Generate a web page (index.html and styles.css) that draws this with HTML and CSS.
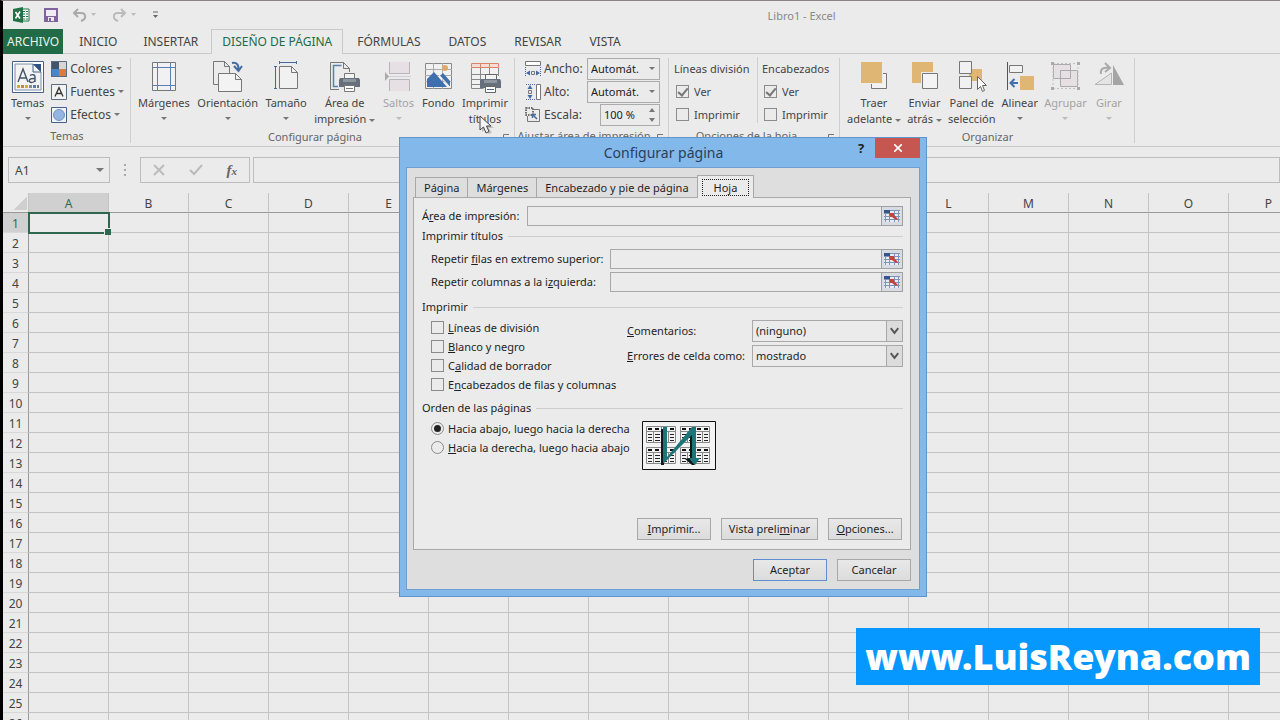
FILE: index.html
```
<!DOCTYPE html>
<html lang="es">
<head>
  <meta charset="UTF-8">
  <meta name="viewport" content="width=device-width, initial-scale=1.0">
  <title>Libro1 - Excel</title>
  <link rel="stylesheet" href="styles.css">
</head>
<body>
<div class="app">

  <!-- Barra de título -->
  <header class="titlebar">
    <div class="quick">
      <svg class="logo" width="17" height="16" viewBox="0 0 17 16"><path d="M9 2h7v12H9z" fill="#fff" stroke="#217346"/><path d="M10 4.500h5M10 7h5M10 9.500h5M10 12h5" stroke="#217346"/><path d="M12.500 3v10" stroke="#ebebeb"/><path d="M0 2l10-2v16L0 14z" fill="#217346"/><path d="M2.500 5l4.500 6.500M7 4.500L2.500 11.500" stroke="#fff" stroke-width="1.600"/></svg>
      <button class="q-btn save" aria-label="Guardar"><svg width="14" height="14" viewBox="0 0 14 14"><path d="M1 1h12v12H1z" fill="#f1ecf4" stroke="#8062a0" stroke-width="2"/><path d="M1 8h12v5H1z" fill="#8062a0"/><path d="M4 9h6v4H4z" fill="#ebebeb"/><path d="M5 10h2v3H5z" fill="#8062a0"/></svg></button>
      <button class="q-btn" aria-label="Deshacer"><svg width="24" height="14" viewBox="0 0 24 14"><path d="M6 1L2 5l4 4M2 5h7c5 0 6 6 0 8" fill="none" stroke="#aaa" stroke-width="2"/><path d="M19 5h5l-2.500 3z" fill="#bbb"/></svg></button>
      <button class="q-btn" aria-label="Rehacer"><svg width="24" height="14" viewBox="0 0 24 14"><path d="M9 1l4 4-4 4M13 5H6C1 5 0 11 6 13" fill="none" stroke="#bbb" stroke-width="2"/><path d="M19 5h5l-2.500 3z" fill="#bbb"/></svg></button>
      <button class="q-btn" aria-label="Personalizar"><svg width="7" height="8" viewBox="0 0 7 8"><path d="M1 1h5" stroke="#666"/><path d="M1 4h5L3.500 7z" fill="#666"/></svg></button>
    </div>
    <div class="doc-title">Libro1 - Excel</div>
  </header>

  <!-- Pestañas -->
  <nav class="tabs">
    <a class="tab file" href="#">ARCHIVO</a>
    <a class="tab" href="#">INICIO</a>
    <a class="tab" href="#">INSERTAR</a>
    <a class="tab active" href="#">DISEÑO DE PÁGINA</a>
    <a class="tab" href="#">FÓRMULAS</a>
    <a class="tab" href="#">DATOS</a>
    <a class="tab" href="#">REVISAR</a>
    <a class="tab" href="#">VISTA</a>
  </nav>

  <!-- Cinta de opciones -->
  <div class="ribbon">
    <section class="group g-themes">
      <div class="group-body">
        <button class="big">
          <svg width="32" height="32" viewBox="0 0 32 32"><path d="M.5.5h31v31H.5z" fill="#fff" stroke="#44618c"/><path d="M3 3h18l8 8v18H3z" fill="#f3f3f3" stroke="#7b8da8"/><path d="M21 3h8v8z" fill="#2f5286"/><path d="M21 3v8h8" fill="none" stroke="#44618c"/><path d="M6 21l5-13 5 13M8 17h6" fill="none" stroke="#44546a" stroke-width="1.400"/><path d="M18 14.500c2-1.500 5-1 5 1v5.500m0-3.500c-7-.5-7 4-3.500 4 2 0 3.500-1.500 3.500-3" fill="none" stroke="#44546a" stroke-width="1.400"/><path d="M5 24h3v3H5z" fill="#d9a62e"/><path d="M9 24h3v3H9z" fill="#c8843c"/><path d="M13 24h3v3h-3z" fill="#c8b03c"/><path d="M17 24h3v3h-3z" fill="#8a8a8a"/><path d="M21 24h3v3h-3z" fill="#557bb5"/><path d="M25 24h2v3h-2z" fill="#777"/></svg>
          <span>Temas</span><i class="arrow"></i>
        </button>
        <div class="stack">
          <button class="small"><svg width="16" height="16" viewBox="0 0 16 16"><path d="M0 0h8v8H0z" fill="#44546a"/><path d="M8 0h8v8H8z" fill="#d6d6d6"/><path d="M0 8h8v8H0z" fill="#4a86c5"/><path d="M8 8h8v8H8z" fill="#dd7b3b"/><path d="M.5.5h15v15H.5z" fill="none" stroke="#5b6b80"/></svg>Colores<i class="arrow"></i></button>
          <button class="small"><svg width="16" height="16" viewBox="0 0 16 16"><path d="M.5.5h15v15H.5z" fill="#f3f3f3" stroke="#5b6b80"/><path d="M4 12.500l4-9 4 9M5.500 9.500h5" fill="none" stroke="#333" stroke-width="1.300"/></svg>Fuentes<i class="arrow"></i></button>
          <button class="small"><svg width="16" height="16" viewBox="0 0 16 16"><path d="M.5.5h15v15H.5z" fill="#f3f3f3" stroke="#44618c"/><circle cx="8" cy="8" r="5.500" fill="#94b5e0" stroke="#6d93c8"/></svg>Efectos<i class="arrow"></i></button>
        </div>
      </div>
      <h2>Temas</h2>
    </section>

    <section class="group g-page">
      <div class="group-body">
        <button class="big">
          <svg width="32" height="32" viewBox="0 0 32 32"><path d="M4.500 1.500h23v28h-23z" fill="#f1f1f1" stroke="#777"/><path d="M9.500 1v29M22.500 1v29M4 6.500h24M4 24.500h24" stroke="#5b7fb5"/></svg>
          <span>Márgenes</span><i class="arrow"></i>
        </button>
        <button class="big">
          <svg width="32" height="32" viewBox="0 0 32 32"><path d="M6 23.500H1.500v-23h11l5 5V12" fill="none" stroke="#777"/><path d="M12.500.5v5h5" fill="none" stroke="#777"/><path d="M6.500 12.500h17l6 6v12h-23z" fill="#f3f3f3" stroke="#777"/><path d="M23.500 12.500v6h6" fill="none" stroke="#777"/><path d="M20 2c5-1 7 2 6.500 8M22 5l4.500 5L30 5" fill="none" stroke="#44699f" stroke-width="2"/></svg>
          <span>Orientación</span><i class="arrow"></i>
        </button>
        <button class="big">
          <svg width="32" height="32" viewBox="0 0 32 32"><path d="M9 1.500h18M9.500 0v3M26.500 0v3M5.500 5v23M4 5.500h3M4 27.500h3" stroke="#44699f"/><path d="M9.500 5.500h12l6 6v16h-18z" fill="#f1f1f1" stroke="#777"/><path d="M21.500 5.500v6h6" fill="none" stroke="#777"/></svg>
          <span>Tamaño</span><i class="arrow"></i>
        </button>
        <button class="big">
          <svg width="32" height="32" viewBox="0 0 32 32"><path d="M10 28.500H1.500v-27h13l6 6V11M14.500 1.500v6h6" fill="none" stroke="#777"/><path d="M9 25.500H4.500v-21h8" fill="none" stroke="#5b7fb5" stroke-width="1.500"/><path d="M15.500 12.500h10V18h-10z" fill="#f3f3f3" stroke="#777"/><path d="M11 17h19l1 2v7H10v-7z" fill="#66707c"/><path d="M14 18h13v3H14z" fill="#8d959e"/><path d="M15.500 24.500h10v6h-10z" fill="#fff" stroke="#777"/><path d="M17 27.500h7" stroke="#777"/></svg>
          <span>Área de<br>impresión <i class="arrow"></i></span>
        </button>
        <button class="big off" disabled>
          <svg width="32" height="32" viewBox="0 0 32 32"><path d="M6.500 1v11.500h20V1M6.500 30V18.500h20V30" fill="#e6e0e4" stroke="#b9b4b7"/><path d="M2 11l4 4.500L2 20z" fill="#aaa"/><path d="M6 15.500h22" stroke="#d0d0d0"/></svg>
          <span>Saltos</span><i class="arrow"></i>
        </button>
        <button class="big">
          <svg width="32" height="32" viewBox="0 0 32 32"><path d="M3.500 2.500h26v25h-26z" fill="#f1f1f1" stroke="#888"/><path d="M11.500 2v26M20.500 2v26M3 8.500h27M3 14.500h27M3 20.500h27" stroke="#aaa"/><circle cx="23" cy="7" r="3" fill="#dfa96c"/><path d="M5 26v-8l7-7 13 15z" fill="#3f6fae"/><path d="M18 15l3-3 7 8v6z" fill="#3f6fae"/><path d="M17 14l11 12" stroke="#ebebeb"/></svg>
          <span>Fondo</span>
        </button>
        <button class="big">
          <svg width="32" height="32" viewBox="0 0 32 32"><path d="M2.500 2.500h27v25h-27z" fill="#f1f1f1"/><path d="M2.500 7v20.500h12M11.500 7v20M20.500 7v6M29.500 7v8M3 13.500h26M3 18.500h12M3 23.500h10" fill="none" stroke="#888"/><path d="M2.500 2.500h27v4h-27zM11.500 2v5M20.500 2v5" fill="#f5ddd5" stroke="#d98468"/><path d="M16.500 13.500h11V19h-11z" fill="#f3f3f3" stroke="#666"/><path d="M12 18h19l1 2v7H11v-7z" fill="#66707c"/><path d="M15 19h13v3H15z" fill="#8d959e"/><path d="M16.500 25.500h10v6h-10z" fill="#fff" stroke="#666"/><path d="M18 28.500h7" stroke="#446a9f"/></svg>
          <span>Imprimir<br>títulos</span>
        </button>
      </div>
      <h2>Configurar página</h2>
      <svg class="launcher" width="8" height="8" viewBox="0 0 8 8"><path d="M.5 6V.5H6M3 3l4 4M7 4v3H4" fill="none" stroke="#777"/></svg>
    </section>

    <section class="group g-fit">
      <div class="group-body rows">
        <div class="row"><svg width="16" height="16" viewBox="0 0 16 16"><path d="M.5.5h15v4H.5z" fill="#fff" stroke="#777"/><path d="M.5 6v9M15.500 6v9" stroke="#446a9f" stroke-dasharray="1 1"/><path d="M6.500 10.500h3v3h-3z" fill="none" stroke="#777"/><path d="M5 9.500v5L1 12zM11 9.500v5l4-2.500z" fill="#446a9f"/></svg><label for="ancho">Ancho:</label><span class="drop"><select id="ancho"><option>Automát.</option></select><i class="arrow"></i></span></div>
        <div class="row"><svg width="16" height="16" viewBox="0 0 16 16"><path d="M11.500.5h4v15h-4z" fill="#fff" stroke="#777"/><path d="M1 .5h9M1 15.500h9" stroke="#446a9f" stroke-dasharray="1 1"/><path d="M3.500 6.500h3v3h-3z" fill="none" stroke="#777"/><path d="M2.500 5h5L5 1zM2.500 11h5L5 15z" fill="#446a9f"/></svg><label for="alto">Alto:</label><span class="drop"><select id="alto"><option>Automát.</option></select><i class="arrow"></i></span></div>
        <div class="row"><svg width="16" height="16" viewBox="0 0 16 16"><path d="M9 2.500h5.500v12h-12V9" fill="none" stroke="#777"/><path d="M1 1h7v7H1z" fill="none" stroke="#444" stroke-width="1.500" stroke-dasharray="1.500 1"/><path d="M12 12L7 7M7.500 11V7.500H11" fill="none" stroke="#446a9f" stroke-width="1.500"/></svg><label for="escala">Escala:</label><span class="spin"><input id="escala" type="text" value="100 %"><svg width="6" height="14" viewBox="0 0 6 14"><path d="M0 4h6L3 0zM0 10h6l-3 4z" fill="#777"/></svg></span></div>
      </div>
      <h2>Ajustar área de impresión</h2>
      <svg class="launcher" width="8" height="8" viewBox="0 0 8 8"><path d="M.5 6V.5H6M3 3l4 4M7 4v3H4" fill="none" stroke="#777"/></svg>
    </section>

    <section class="group g-sheet">
      <div class="group-body">
        <div class="opts">
          <span>Líneas división</span>
          <label><input type="checkbox" checked>Ver</label>
          <label><input type="checkbox">Imprimir</label>
        </div>
        <div class="opts">
          <span>Encabezados</span>
          <label><input type="checkbox" checked>Ver</label>
          <label><input type="checkbox">Imprimir</label>
        </div>
      </div>
      <h2>Opciones de la hoja</h2>
      <svg class="launcher" width="8" height="8" viewBox="0 0 8 8"><path d="M.5 6V.5H6M3 3l4 4M7 4v3H4" fill="none" stroke="#777"/></svg>
    </section>

    <section class="group g-arrange">
      <div class="group-body">
        <button class="big">
          <svg width="32" height="32" viewBox="0 0 32 32"><path d="M13.500 12.500h15v15h-15z" fill="#f3f3f3" stroke="#777"/><path d="M2 0h23v23H2z" fill="#ebebeb"/><path d="M3 1h21v21H3z" fill="#dfb674"/></svg>
          <span>Traer<br>adelante <i class="arrow"></i></span>
        </button>
        <button class="big">
          <svg width="32" height="32" viewBox="0 0 32 32"><path d="M3 1h21v21H3z" fill="#dfb674"/><path d="M12 11h18v18H12z" fill="#ebebeb"/><path d="M13.500 12.500h15v15h-15z" fill="#f3f3f3" stroke="#777"/></svg>
          <span>Enviar<br>atrás <i class="arrow"></i></span>
        </button>
        <button class="big">
          <svg width="32" height="32" viewBox="0 0 32 32"><path d="M13 8h13v12H13z" fill="#dfb674"/><path d="M3.500.5h12v12h-12zM3.500 15.500h12v12h-12z" fill="#f1f1f1" stroke="#777"/><path d="M21.500 15.500v13l3-3 2 5 2-1-2-5h4z" fill="#fff" stroke="#666"/></svg>
          <span>Panel de<br>selección</span>
        </button>
        <button class="big">
          <svg width="32" height="32" viewBox="0 0 32 32"><path d="M3.500 1v28" stroke="#555"/><path d="M5.500 4.500h13v7h-13z" fill="#f1f1f1" stroke="#777"/><path d="M16 15h14v14H16z" fill="#dfb674"/><path d="M14 22H7M10.500 18L6.500 22l4 4" fill="none" stroke="#3f6fae" stroke-width="2"/></svg>
          <span>Alinear</span><i class="arrow"></i>
        </button>
        <button class="big off" disabled>
          <svg width="32" height="32" viewBox="0 0 32 32"><path d="M4.500 3.500h17v14h-17zM11.500 9.500h17v16h-17z" fill="#e6dfe3" stroke="#aaa"/><path d="M4 2.500h25M4 27.500h25M4 2v26M29 2v26" stroke="#c4bfc2" stroke-dasharray="2 2"/><path d="M2 1h3v3H2zM28 1h3v3h-3zM2 26h3v3H2zM28 26h3v3h-3z" fill="#aaa"/></svg>
          <span>Agrupar</span><i class="arrow"></i>
        </button>
        <button class="big off" disabled>
          <svg width="32" height="32" viewBox="0 0 32 32"><path d="M18.500 12v11.500H2z" fill="#e4e4e4" stroke="#b5b5b5"/><path d="M20 4l11 20H20z" fill="#a5a5a5"/><path d="M8 13c-1-6 4-7 8-6M12 2l5 5-5 4" fill="none" stroke="#aaa" stroke-width="2"/></svg>
          <span>Girar</span><i class="arrow"></i>
        </button>
      </div>
      <h2>Organizar</h2>
    </section>
  </div>

  <!-- Barra de fórmulas -->
  <div class="formula-bar">
    <span class="name-box"><input type="text" value="A1" aria-label="Cuadro de nombres"><i class="arrow"></i></span>
    <svg class="dots" width="2" height="12" viewBox="0 0 2 12"><path d="M0 0h2v2H0zM0 5h2v2H0zM0 10h2v2H0z" fill="#aaa"/></svg>
    <div class="fx">
      <button aria-label="Cancelar"><svg width="12" height="12" viewBox="0 0 12 12"><path d="M1 1l10 10M11 1L1 11" stroke="#bbb" stroke-width="2"/></svg></button>
      <button aria-label="Introducir"><svg width="14" height="12" viewBox="0 0 14 12"><path d="M1 6l4 4 8-9" fill="none" stroke="#bbb" stroke-width="2"/></svg></button>
      <button class="fn">f<small>x</small></button>
    </div>
    <input class="formula" type="text" aria-label="Fórmula">
  </div>

  <!-- Hoja -->
  <div class="sheet">
    <table class="grid">
      <thead><tr id="cols"><th class="corner"></th></tr></thead>
      <tbody id="cells"></tbody>
    </table>
  </div>

  <!-- Cuadro de diálogo -->
  <div class="dialog" role="dialog" aria-labelledby="dlg-title">
    <div class="dlg-head">
      <h1 id="dlg-title">Configurar página</h1>
      <button class="help">?</button>
      <button class="close" aria-label="Cerrar"><svg width="8" height="8" viewBox="0 0 8 8"><path d="M0 0l8 8M8 0L0 8" stroke="#fff" stroke-width="1.600"/></svg></button>
    </div>
    <div class="dlg-body">
      <div class="dlg-tabs">
        <button>Página</button>
        <button>Márgenes</button>
        <button>Encabezado y pie de página</button>
        <button class="current"><span>Hoja</span></button>
      </div>
      <div class="panel">
        <div class="field">
          <label for="area">Á<u>r</u>ea de impresión:</label>
          <input id="area" type="text">
          <button class="pick" aria-label="Contraer"><svg width="16" height="12" viewBox="0 0 16 12"><path d="M0 0h16v12H0z" fill="#e8ebf2"/><path d="M0 .5h16M0 3.500h16M0 6.500h16M0 9.500h16M1.500 0v12M5.500 0v12M10.500 0v12M14.500 0v12" stroke="#7d93b8"/><path d="M0 0h6v3H0z" fill="#34558b"/><path d="M5 3h5v2l4 4-2 1-4-3H6z" fill="#c4443a"/></svg></button>
        </div>
        <h3><span>Imprimir títulos</span></h3>
        <div class="field sub">
          <label for="filas">Repetir <u>f</u>ilas en extremo superior:</label>
          <input id="filas" type="text">
          <button class="pick" aria-label="Contraer"><svg width="16" height="12" viewBox="0 0 16 12"><path d="M0 0h16v12H0z" fill="#e8ebf2"/><path d="M0 .5h16M0 3.500h16M0 6.500h16M0 9.500h16M1.500 0v12M5.500 0v12M10.500 0v12M14.500 0v12" stroke="#7d93b8"/><path d="M0 0h6v3H0z" fill="#34558b"/><path d="M5 3h5v2l4 4-2 1-4-3H6z" fill="#c4443a"/></svg></button>
        </div>
        <div class="field sub">
          <label for="columnas">Repetir columnas a la i<u>z</u>quierda:</label>
          <input id="columnas" type="text">
          <button class="pick" aria-label="Contraer"><svg width="16" height="12" viewBox="0 0 16 12"><path d="M0 0h16v12H0z" fill="#e8ebf2"/><path d="M0 .5h16M0 3.500h16M0 6.500h16M0 9.500h16M1.500 0v12M5.500 0v12M10.500 0v12M14.500 0v12" stroke="#7d93b8"/><path d="M0 0h6v3H0z" fill="#34558b"/><path d="M5 3h5v2l4 4-2 1-4-3H6z" fill="#c4443a"/></svg></button>
        </div>
        <h3><span>Imprimir</span></h3>
        <div class="print">
          <div class="checks">
            <label><input type="checkbox"><span><u>L</u>íneas de división</span></label>
            <label><input type="checkbox"><span><u>B</u>lanco y negro</span></label>
            <label><input type="checkbox"><span>C<u>a</u>lidad de borrador</span></label>
            <label><input type="checkbox"><span>E<u>n</u>cabezados de filas y columnas</span></label>
          </div>
          <div class="combos">
            <div class="combo-row"><label for="coment"><u>C</u>omentarios:</label><span class="combo"><select id="coment"><option>(ninguno)</option></select><svg width="16" height="18" viewBox="0 0 16 18"><path d="M4 6l4 5 4-5" fill="none" stroke="#555" stroke-width="2"/></svg></span></div>
            <div class="combo-row"><label for="errores"><u>E</u>rrores de celda como:</label><span class="combo"><select id="errores"><option>mostrado</option></select><svg width="16" height="18" viewBox="0 0 16 18"><path d="M4 6l4 5 4-5" fill="none" stroke="#555" stroke-width="2"/></svg></span></div>
          </div>
        </div>
        <h3><span>Orden de las páginas</span></h3>
        <div class="order">
          <div class="checks">
            <label><input type="radio" name="orden" checked><span>Hacia abajo, lue<u>g</u>o hacia la derecha</span></label>
            <label><input type="radio" name="orden"><span><u>H</u>acia la derecha, luego hacia abajo</span></label>
          </div>
          <svg width="74" height="49" viewBox="0 0 74 49">
            <defs>
              <g id="sheet-page">
                <path d="M.5.5h29v16H.5zM0 5.500h30M7.500 5v12M15.500 0v17M22.500 5v12" fill="#f3f3f3" stroke="#888"/>
                <path d="M2 3h4M9 3h4M17 3h4M24 3h4" stroke="#111" stroke-width="2"/>
                <path d="M2 8.500h4M2 11.500h4M2 14.500h4M9 8.500h5M9 11.500h5M9 14.500h5M17 8.500h4M17 11.500h4M17 14.500h4M24 8.500h4M24 11.500h4M24 14.500h4" stroke="#222"/>
              </g>
            </defs>
            <path d="M.5.5h73v48H.5z" fill="#f3f3f3" stroke="#111"/>
            <use href="#sheet-page" x="4" y="5"/><use href="#sheet-page" x="38" y="5"/>
            <use href="#sheet-page" x="4" y="26"/><use href="#sheet-page" x="38" y="26"/>
            <path d="M19 8h3v36h-3zM48 14h3v25h-3zM43 38l7 6h3l-6-7z" fill="#0b1a1c"/>
            <path d="M21 6h4v30L50 6h4v31h4l-5 7-6-7h3V14L22 42h-1z" fill="#1f7478"/>
          </svg>
        </div>
        <div class="panel-btns">
          <button class="btn"><u>I</u>mprimir...</button>
          <button class="btn wide">Vista preli<u>m</u>inar</button>
          <button class="btn"><u>O</u>pciones...</button>
        </div>
      </div>
      <div class="dlg-foot">
        <button class="btn default">Aceptar</button>
        <button class="btn">Cancelar</button>
      </div>
    </div>
  </div>

  <!-- Puntero -->
  <svg class="pointer" width="16" height="20" viewBox="0 0 16 20"><path d="M3 3v14l4-3 2 5 4-1-3-5h5z" fill="#999" opacity=".5"/><path d="M1 1v14l3.500-3 2.500 6 3-1.500-2.500-5.500H12z" fill="#f4f4f4" stroke="#444"/></svg>

  <a class="watermark" href="#">www.LuisReyna.com</a>
</div>

<script>
  // columnas A-P y filas 1-26
  var cols = 'ABCDEFGHIJKLMNOP'.split('');
  var head = document.getElementById('cols');
  var cells = document.getElementById('cells');

  cols.forEach(function (c, i) {
    var th = document.createElement('th');
    th.textContent = c;
    if (i === 0) th.className = 'on';
    head.appendChild(th);
  });

  for (var r = 1; r <= 26; r++) {
    var tr = document.createElement('tr');
    var th = document.createElement('th');
    th.textContent = r;
    if (r === 1) th.className = 'on';
    tr.appendChild(th);
    for (var c = 0; c < cols.length; c++) {
      var td = document.createElement('td');
      if (r === 1 && c === 0) td.className = 'selected';
      tr.appendChild(td);
    }
    cells.appendChild(tr);
  }
</script>
</body>
</html>
```
FILE: styles.css
```
* {
  box-sizing: border-box;
}
body {
  margin: 0;
  font-family: "Noto Sans", "Open Sans", sans-serif;
  font-size: 12px;
  color: #444;
  background: #ebebeb;
  overflow: hidden;
}
button, input, select {
  font: inherit;
  color: inherit;
  margin: 0;
  padding: 0;
  border: none;
  border-radius: 0;
  background: none;
}
select {
  appearance: none;
}
a {
  color: inherit;
  text-decoration: none;
}
svg {
  display: block;
  flex: none;
}
h1, h2, h3 {
  margin: 0;
  font-weight: normal;
}

.app {
  position: relative;
  display: flex;
  flex-direction: column;
  height: 100vh;
  border-left: 3px solid #000;
  border-top: 1px solid #8a8486;
  overflow: hidden;
}
.arrow {
  display: inline-block;
  border: 3px solid transparent;
  border-top-color: #777;
  border-bottom: none;
}

/* ---------- barra de título ---------- */
.titlebar {
  display: flex;
  align-items: center;
  height: 28px;
  flex: none;
}
.quick {
  display: flex;
  align-items: center;
  gap: 16px;
  padding-left: 10px;
}
.save {
  margin: 0 -2px;
}
.doc-title {
  flex: 1;
  padding-left: 164px;
  text-align: center;
  font-size: 11px;
  color: #888;
}

/* ---------- pestañas ---------- */
.tabs {
  display: flex;
  height: 25px;
  flex: none;
  line-height: 24px;
  border-bottom: 1px solid #c9c9c9;
}
.tab {
  padding: 0 12px;
  height: 25px;
  border: 1px solid transparent;
  border-bottom: none;
}
.tab.file {
  padding: 0 3px;
  margin-right: 3px;
  background: #216b46;
  color: #e8f2ec;
}
.tab.active {
  padding: 0 10px;
  background: #ebebeb;
  border-color: #c9c9c9;
  color: #216b46;
}
.tab.active ~ .tab {
  padding: 0 13px;
}

/* ---------- cinta ---------- */
.ribbon {
  display: flex;
  height: 93px;
  flex: none;
  border-bottom: 1px solid #c9c9c9;
}
.group {
  position: relative;
  display: flex;
  flex-direction: column;
  padding-top: 3px;
  flex: none;
}
.group::after {
  content: "";
  position: absolute;
  right: 0;
  top: 4px;
  bottom: 3px;
  border-right: 1px solid #cfcfcf;
}
.group h2 {
  font-size: 11px;
  line-height: 20px;
  text-align: center;
  color: #666;
}
.g-page h2, .g-fit h2, .g-sheet h2 {
  padding-right: 16px;
  white-space: nowrap;
}
.group-body {
  display: flex;
  height: 72px;
}
.launcher {
  position: absolute;
  right: 4px;
  bottom: 4px;
}
.big {
  display: flex;
  flex-direction: column;
  align-items: center;
  padding: 4px 0 0;
  font-size: 11px;
  line-height: 16px;
  white-space: nowrap;
}
.big > svg {
  margin-bottom: 2px;
}
.big > .arrow {
  margin-top: 6px;
}
.big span .arrow {
  vertical-align: middle;
}
.off {
  color: #a3a3a3;
}
.off .arrow {
  border-top-color: #bbb;
}
.small {
  display: flex;
  align-items: center;
  gap: 3px;
  height: 23px;
}
.g-themes { width: 128px; }
.g-page { width: 384px; }
.g-fit { width: 154px; }
.g-sheet { width: 171px; }
.g-arrange { width: 295px; }

.g-themes .group-body {
  gap: 7px;
  padding-left: 8px;
}
.g-page .group-body {
  padding: 0 7px;
  justify-content: space-between;
}
.g-arrange .group-body {
  padding: 0 10px 0 7px;
  justify-content: space-between;
}
.rows {
  flex-direction: column;
  padding: 0 9px 0 10px;
}
.row {
  display: flex;
  align-items: center;
  gap: 3px;
  height: 23px;
}
.row label {
  flex: 1;
}
.drop, .spin {
  display: flex;
  align-items: center;
  justify-content: space-between;
  width: 73px;
  height: 22px;
  padding: 0 4px 0 3px;
  border: 1px solid #ababab;
  font-size: 11px;
  color: #222;
}
.drop select {
  width: 58px;
}
.spin {
  width: 60px;
}
.spin input {
  width: 42px;
}
.opts {
  display: flex;
  flex-direction: column;
  padding-left: 5px;
  font-size: 11px;
  line-height: 23px;
  width: 88px;
  white-space: nowrap;
}
.opts + .opts {
  height: 66px;
  width: 82px;
  padding-left: 4px;
  border-left: 1px solid #cfcfcf;
}
.opts label {
  display: flex;
  align-items: center;
  gap: 5px;
  height: 23px;
  padding-left: 2px;
}

/* casillas y opciones */
input[type=checkbox],
input[type=radio] {
  appearance: none;
  position: relative;
  width: 13px;
  height: 13px;
  flex: none;
  border: 1px solid #8c8c8c;
}
input[type=radio] {
  border-radius: 50%;
}
input[type=checkbox]:checked::after {
  content: "";
  position: absolute;
  left: 3px;
  top: 0;
  width: 4px;
  height: 8px;
  border: solid #777;
  border-width: 0 2px 2px 0;
  transform: rotate(40deg);
}
input[type=radio]:checked::after {
  content: "";
  position: absolute;
  left: 2px;
  top: 2px;
  width: 7px;
  height: 7px;
  border-radius: 50%;
  background: #222;
}

/* ---------- barra de fórmulas ---------- */
.formula-bar {
  display: flex;
  align-items: center;
  height: 46px;
  flex: none;
  padding-left: 5px;
}
.name-box, .fx, .formula {
  height: 26px;
  border: 1px solid #bdbdbd;
}
.name-box {
  display: flex;
  align-items: center;
  width: 102px;
  padding: 0 5px 0 6px;
}
.name-box input {
  flex: 1;
  width: 60px;
}
.name-box .arrow {
  border-width: 4px 4px 0;
}
.dots {
  margin: 0 14px;
}
.fx {
  display: flex;
  align-items: center;
  justify-content: space-between;
  width: 110px;
  padding: 0 12px;
  margin-right: 3px;
}
.fn {
  font: italic bold 15px "Liberation Serif", serif;
  color: #666;
}
.fn small {
  font-size: 11px;
}
.formula {
  flex: 1;
}

/* ---------- hoja ---------- */
.sheet {
  flex: 1;
  overflow: hidden;
}
.grid {
  width: 1306px;
  table-layout: fixed;
  border-collapse: separate;
  border-spacing: 0;
}
.grid th, .grid td {
  height: 20px;
  padding: 0;
  border-right: 1px solid #c4c4c4;
  border-bottom: 1px solid #c4c4c4;
}
.grid th {
  width: 80px;
  padding-top: 2px;
  font-weight: normal;
  line-height: 17px;
}
.grid thead th {
  border-bottom-color: #999;
}
.grid th:first-child {
  width: 26px;
}
.grid tbody th {
  border-bottom-color: #d8d8d8;
  border-right-color: #999;
}
.grid .corner {
  background: linear-gradient(135deg, transparent 50%, #cfcfcf 50%) 11px 4px / 13px 13px no-repeat;
}
.grid .on {
  background: #d0d0d0;
  color: #2f6b4f;
}
.selected {
  position: relative;
  outline: 2px solid #2f6650;
  outline-offset: -1px;
}
.selected::after {
  content: "";
  position: absolute;
  right: -3px;
  bottom: -3px;
  width: 6px;
  height: 6px;
  background: #2f6650;
  border: solid #ebebeb;
  border-width: 1px 0 0 1px;
}

/* ---------- diálogo ---------- */
.dialog {
  position: absolute;
  left: 396px;
  top: 136px;
  width: 528px;
  padding: 0 6px 6px;
  border: 1px solid #5f94cc;
  background: #83b8ea;
  font-size: 11px;
  color: #1e1e1e;
}
.dlg-head {
  display: flex;
  align-items: flex-start;
  height: 29px;
}
.dlg-head h1 {
  flex: 1;
  padding-left: 74px;
  text-align: center;
  font-size: 14px;
  line-height: 30px;
  color: #2a3f5a;
}
.help {
  width: 28px;
  line-height: 20px;
  font-size: 13px;
  font-weight: bold;
}
.close {
  display: flex;
  align-items: center;
  justify-content: center;
  width: 45px;
  height: 20px;
  background: #c55650;
}
.dlg-body {
  padding: 7px 8px 8px 6px;
  border: 1px solid #6f9fd0;
  background: #dedede;
}
.dlg-tabs {
  display: flex;
  align-items: flex-end;
  height: 22px;
  padding-left: 2px;
}
.dlg-tabs button {
  height: 20px;
  padding: 0 8px;
  border: 1px solid #a8a8a8;
  border-right: none;
  border-bottom: none;
}
.dlg-tabs .current {
  position: relative;
  height: 23px;
  margin-bottom: -1px;
  padding: 0 4px;
  border-right: 1px solid #a8a8a8;
  background: #ebebeb;
}
.current span {
  display: block;
  padding: 0 11px;
  border: 1px dotted #222;
}
.panel {
  padding: 8px 7px 9px;
  border: 1px solid #a8a8a8;
  background: #ebebeb;
}
.field {
  display: flex;
  align-items: center;
  height: 20px;
  margin-left: 1px;
}
.field + .field {
  margin-top: 3px;
}
.field label {
  width: 105px;
  padding-bottom: 2px;
}
.field.sub label {
  width: 188px;
  padding-left: 9px;
}
.field input {
  flex: 1;
  height: 20px;
  border: 1px solid #a8a8a8;
}
.pick {
  display: flex;
  align-items: center;
  justify-content: center;
  width: 22px;
  height: 20px;
  margin-left: -1px;
  border: 1px solid #a0a0a0;
  background: #d8dbe2;
}
.panel h3 {
  display: flex;
  align-items: center;
  gap: 5px;
  height: 20px;
  margin-left: 1px;
  margin-bottom: 3px;
  font-size: 11px;
}
.panel h3 span {
  padding-bottom: 2px;
}
.panel h3::after {
  content: "";
  flex: 1;
  border-top: 1px solid #cdcdcd;
}
.field.sub + h3 {
  margin-top: 5px;
  margin-bottom: 1px;
}
.print {
  display: flex;
  justify-content: space-between;
  margin-bottom: 4px;
}
.print + h3 {
  margin-bottom: 1px;
}
.checks {
  padding-left: 10px;
  white-space: nowrap;
}
.checks label {
  display: flex;
  align-items: center;
  gap: 4px;
  height: 19px;
}
.combos {
  padding-top: 2px;
}
.combo-row {
  display: flex;
  align-items: center;
  height: 22px;
  margin-bottom: 3px;
}
.combo-row label {
  width: 125px;
  padding-bottom: 2px;
}
.combo {
  position: relative;
  width: 151px;
}
.combo select {
  width: 100%;
  height: 22px;
  padding: 0 0 2px 3px;
  border: 1px solid #a8a8a8;
}
.combo svg {
  position: absolute;
  right: 1px;
  top: 1px;
  height: 20px;
  background: #dcdcdc;
  border-left: 1px solid #a8a8a8;
  pointer-events: none;
}
.order {
  display: flex;
  gap: 12px;
}
.order > svg {
  margin-top: 2px;
}
.panel-btns, .dlg-foot {
  display: flex;
  justify-content: flex-end;
  gap: 10px;
}
.panel-btns {
  margin-top: 48px;
  padding-right: 1px;
}
.dlg-foot {
  margin-top: 9px;
}
.btn {
  width: 74px;
  height: 22px;
  padding-bottom: 2px;
  border: 1px solid #a8a8a8;
  background: linear-gradient(#e8e8e8, #dcdcdc);
}
.btn.wide {
  width: 97px;
}
.btn.default {
  border-color: #5f8fd0;
}

.pointer {
  position: absolute;
  left: 476px;
  top: 114px;
}
.watermark {
  position: absolute;
  right: 20px;
  bottom: 35px;
  padding: 0 9px;
  line-height: 57px;
  font-family: "Noto Sans", sans-serif;
  font-size: 36px;
  font-weight: 900;
  color: #fff;
  background: #0798ff;
}
```
